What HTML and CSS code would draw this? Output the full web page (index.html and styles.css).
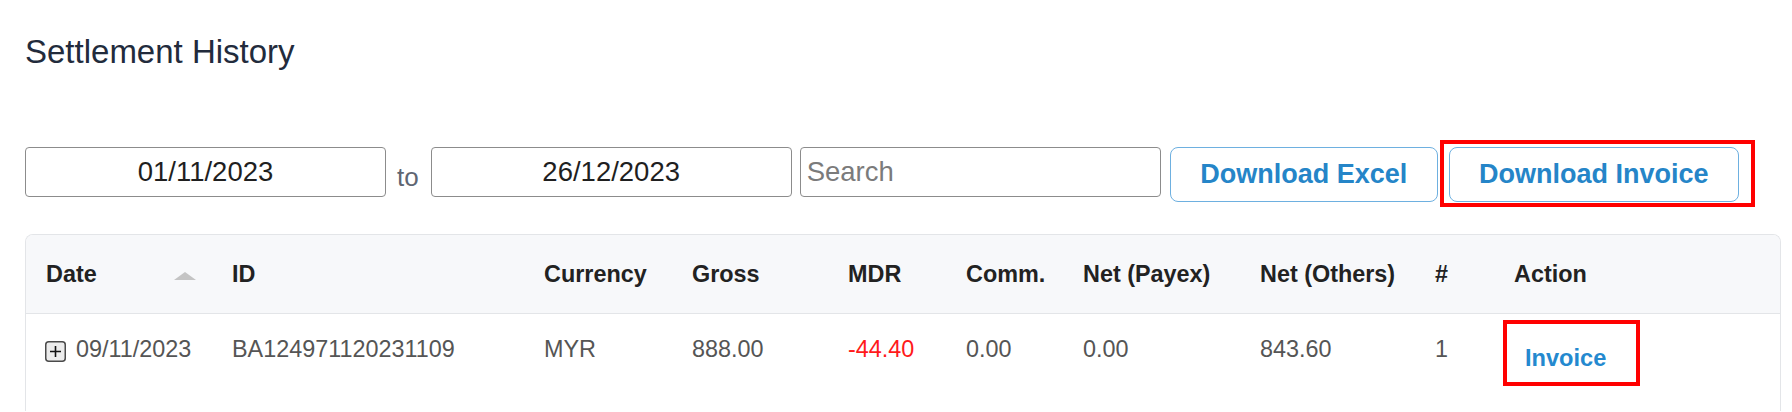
FILE: index.html
```html
<!DOCTYPE html>
<html lang="en">
<head>
<meta charset="UTF-8">
<meta name="viewport" content="width=device-width, initial-scale=1.0">
<title>Settlement History</title>
<link rel="stylesheet" href="styles.css">
</head>
<body>
<div class="page">
    <h1 class="page-title">Settlement History</h1>

    <div class="toolbar">
        <input type="text" class="field field-date" value="01/11/2023">
        <span class="to-label">to</span>
        <input type="text" class="field field-date" value="26/12/2023">
        <input type="text" class="field field-search" placeholder="Search">
        <button class="btn btn-excel">Download Excel</button>
        <span class="annotated annotated-btn"><button class="btn btn-invoice">Download Invoice</button></span>
    </div>

    <div class="table-card">
        <table class="settle-table">
            <colgroup>
                <col style="width:186px">
                <col style="width:312px">
                <col style="width:148px">
                <col style="width:156px">
                <col style="width:118px">
                <col style="width:117px">
                <col style="width:177px">
                <col style="width:175px">
                <col style="width:79px">
                <col>
            </colgroup>
            <thead>
                <tr>
                    <th><div class="th-sort"><span>Date</span><span class="sort-up"></span></div></th>
                    <th>ID</th>
                    <th>Currency</th>
                    <th>Gross</th>
                    <th>MDR</th>
                    <th>Comm.</th>
                    <th>Net (Payex)</th>
                    <th>Net (Others)</th>
                    <th>#</th>
                    <th>Action</th>
                </tr>
            </thead>
            <tbody>
                <tr>
                    <td>
                        <svg class="expand-icon" width="21" height="21" viewBox="0 0 21 21">
                            <rect x="0.75" y="0.75" width="19.5" height="19.5" rx="3" fill="#ececec" stroke="#4a4a4a" stroke-width="1.5"/>
                            <path d="M10.5 5v11M5 10.5h11" stroke="#111" stroke-width="1.6"/>
                        </svg>09/11/2023
                    </td>
                    <td>BA124971120231109</td>
                    <td>MYR</td>
                    <td>888.00</td>
                    <td class="neg">-44.40</td>
                    <td>0.00</td>
                    <td>0.00</td>
                    <td>843.60</td>
                    <td>1</td>
                    <td><a href="#" class="invoice-link annotated">Invoice</a></td>
                </tr>
            </tbody>
        </table>
    </div>
</div>
</body>
</html>
```

FILE: styles.css
```css
body {
    margin: 0;
    background: #fff;
    font-family: "Liberation Sans", Arial, sans-serif;
}

.page {
    padding: 0 11px 0 25px;
}

.page-title {
    margin: 33px 0 0;
    font-size: 33px;
    line-height: 38px;
    font-weight: normal;
    color: #222b3c;
}

/* filters + buttons */
.toolbar {
    display: flex;
    align-items: flex-start;
    margin-top: 76px;
}

.field {
    box-sizing: border-box;
    width: 361px;
    height: 50px;
    margin: 0;
    padding: 0 6px;
    border: 1px solid #8c8c8c;
    border-radius: 4px;
    font-family: "Liberation Sans", Arial, sans-serif;
    font-size: 27.5px;
    color: #1f1f1f;
    background: #fff;
}
.field-date {
    text-align: center;
}
.field-search {
    margin-left: 8px;
}
.field::placeholder {
    color: #7b7b7b;
}

.to-label {
    margin: 17px 12px 0 11px;
    font-size: 26px;
    line-height: 26px;
    color: #5f6673;
}

.btn {
    box-sizing: border-box;
    height: 55px;
    margin: 0;
    padding: 0 20px;
    background: #fff;
    border: 1px solid #6eb0e0;
    border-radius: 8px;
    color: #2585c8;
    font-family: "Liberation Sans", Arial, sans-serif;
    font-size: 27px;
    font-weight: bold;
    cursor: pointer;
}
.btn-excel {
    width: 268px;
    margin-left: 9px;
}
.btn-invoice {
    width: 290px;
}

/* red highlight boxes drawn over the content */
.annotated {
    position: relative;
}
.annotated::after {
    content: "";
    position: absolute;
    border: 4px solid #ff0000;
    pointer-events: none;
}
.annotated-btn {
    display: block;
    margin-left: 11px;
}
.annotated-btn::after {
    top: -7px;
    left: -9px;
    right: -16px;
    bottom: -5px;
}

/* table */
.table-card {
    margin-top: 32px;
    border: 1px solid #e3e5e8;
    border-bottom: none;
    border-radius: 8px 8px 0 0;
    overflow: hidden;
}

.settle-table {
    width: 100%;
    border-collapse: collapse;
    table-layout: fixed;
}

.settle-table th {
    padding: 26px 0 26px 20px;
    background: #f7f8fa;
    border-bottom: 1px solid #e3e5e8;
    text-align: left;
    font-size: 23.4px;
    line-height: 26px;
    font-weight: bold;
    color: #222;
    white-space: nowrap;
}

.th-sort {
    display: flex;
    align-items: center;
    justify-content: space-between;
    padding-right: 16px;
}
.sort-up {
    width: 0;
    height: 0;
    margin-top: 4px;
    border-left: 11px solid transparent;
    border-right: 11px solid transparent;
    border-bottom: 8px solid #c4c4c4;
}

.settle-table td {
    padding: 22px 0 40px 20px;
    vertical-align: top;
    font-size: 23.4px;
    line-height: 26px;
    color: #555;
    white-space: nowrap;
}

.expand-icon {
    vertical-align: -5px;
    margin: 0 10px 0 -1px;
}

.neg {
    color: #ff1a1a !important;
}

.invoice-link {
    display: inline-block;
    margin: 9px 0 0 11px;
    font-size: 23.6px;
    font-weight: bold;
    color: #2489cf;
    text-decoration: none;
}
.invoice-link::after {
    top: -25px;
    left: -22px;
    right: -34px;
    bottom: -15px;
}
```
